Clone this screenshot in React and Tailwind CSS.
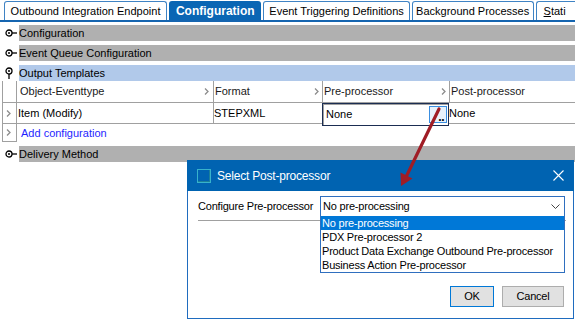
import React from "react";

function KeyIcon() {
  return (
    <svg width="12" height="8" viewBox="0 0 12 8">
      <circle cx="4" cy="4" r="3" fill="white" stroke="black" strokeWidth="1.3" />
      <circle cx="4" cy="4" r="1" fill="black" />
      <line x1="7" y1="4" x2="12" y2="4" stroke="black" strokeWidth="1.3" />
    </svg>
  );
}

function PinIcon() {
  return (
    <svg width="8" height="12" viewBox="0 0 8 12">
      <circle cx="4" cy="4" r="3" fill="white" stroke="black" strokeWidth="1.3" />
      <circle cx="4" cy="4" r="1" fill="black" />
      <line x1="4" y1="7" x2="4" y2="12" stroke="black" strokeWidth="1.3" />
    </svg>
  );
}

function Chevron() {
  return (
    <svg width="5" height="7" viewBox="0 0 5 7">
      <path d="M1 0.5 L4 3.5 L1 6.5" fill="none" stroke="#8c8c8c" strokeWidth="1.3" />
    </svg>
  );
}

function Section({ label, open, blue }) {
  return (
    <div className="flex items-center h-[16px]">
      <div className="w-[19px] h-full flex items-center pl-[5px]">
        {open ? <PinIcon /> : <KeyIcon />}
      </div>
      <div className={blue ? "flex-1 h-full flex items-center bg-[#b1c9ea]" : "flex-1 h-full flex items-center bg-[#b0b0b0]"}>
        {label}
      </div>
    </div>
  );
}

function Tab({ label, active, w }) {
  if (active) {
    return (
      <div className={`${w} h-[19px] flex items-center justify-center rounded-t-[3px] bg-[#0a66b4] text-white font-bold text-[12px]`}>
        {label}
      </div>
    );
  }
  return (
    <div className={`${w} h-[19px] flex items-center justify-center rounded-t-[3px] border border-b-0 border-[#3f83c4] bg-white`}>
      {label}
    </div>
  );
}

export default function App() {
  return (
    <div className="relative w-[575px] h-[319px] overflow-hidden bg-white text-black text-[11px] font-['Liberation_Sans',Arial,sans-serif]">
      {/* tabs */}
      <div className="flex items-end gap-[2px] h-[22px] pl-[4px] border-b-2 border-[#1565b0] whitespace-nowrap">
        <Tab label="Outbound Integration Endpoint" w="w-[166px]" />
        <Tab label="Configuration" w="w-[94px]" active />
        <Tab label="Event Triggering Definitions" w="w-[149px]" />
        <Tab label="Background Processes" w="w-[124px]" />
        <div className="w-[40px] h-[19px] flex items-center pl-[7px] rounded-tl-[3px] border border-b-0 border-r-0 border-[#3f83c4] overflow-hidden">
          <span className="underline">S</span>tati
        </div>
      </div>

      {/* sections */}
      <div className="mt-[3px] flex flex-col gap-[4px]">
        <Section label="Configuration" />
        <Section label="Event Queue Configuration" />
        <Section label="Output Templates" open blue />
      </div>

      {/* table */}
      <div className="pl-[2px] text-[#1a1a1a]">
        <div className="flex h-[22px]">
          <div className="w-[15px] border-x border-b border-[#a0a0a0]" />
          <div className="w-[197px] flex items-center justify-between pl-[3px] pr-[4px] border-r border-b border-[#a0a0a0]">
            Object-Eventtype <Chevron />
          </div>
          <div className="w-[109px] flex items-center justify-between pl-[1px] pr-[3px] border-r border-b border-[#a0a0a0]">
            Format <Chevron />
          </div>
          <div className="w-[127px] flex items-center justify-between pl-[1px] pr-[3px] border-r border-b border-[#a0a0a0]">
            Pre-processor <Chevron />
          </div>
          <div className="flex-1 flex items-center pl-[1px] border-b border-[#a0a0a0]">Post-processor</div>
        </div>
        <div className="flex h-[21px] text-black">
          <div className="w-[15px] flex items-center pl-[3px] border-x border-b border-[#a0a0a0]">
            <Chevron />
          </div>
          <div className="w-[197px] flex items-center pl-[1px] border-r border-b border-[#a0a0a0]">Item (Modify)</div>
          <div className="w-[109px] flex items-center border-r border-b border-[#a0a0a0]">STEPXML</div>
          <div className="w-[127px] h-[23px] flex items-center justify-between pl-[3px] pr-[1px] bg-white border border-[#1b2d52] shadow-[inset_1px_1px_0_#a0a0a0] -ml-px">
            None
            <div className="w-[18px] h-[17px] flex items-end justify-end pr-[2px] pb-[1px] leading-[8px] border border-[#3a8ee0] bg-[#e8f2fb] font-bold text-[12px] tracking-[-0.5px]">
              ..
            </div>
          </div>
          <div className="flex-1 flex items-center border-b border-[#a0a0a0]">None</div>
        </div>
        <div className="flex h-[18px]">
          <div className="w-[15px] flex items-center pl-[3px] border-x border-b border-[#a0a0a0]">
            <Chevron />
          </div>
          <div className="flex items-center pl-[4px] text-[#1f1fff]">Add configuration</div>
        </div>
      </div>

      <div className="mt-[4px]">
        <Section label="Delivery Method" />
      </div>

      {/* dialog */}
      <div className="absolute left-[187px] top-[160px] w-[387px] h-[159px] flex flex-col bg-white border-x border-b border-[#1f6cbf] tracking-[-0.2px]">
        <div className="h-[31px] -mx-px flex items-center pl-[10px] pr-[10px] bg-[#0063b1] text-white text-[12px]">
          <div className="w-[14px] h-[14px] border border-[#37b2cc] shadow-[inset_-1px_-1px_0_#1a7f9a]" />
          <span className="ml-[6px] flex-1">Select Post-processor</span>
          <svg width="11" height="11" viewBox="0 0 11 11">
            <path d="M0.5 0.5 L10.5 10.5 M10.5 0.5 L0.5 10.5" stroke="white" strokeWidth="1.1" />
          </svg>
        </div>
        <div className="flex-1 flex flex-col pl-[10px] pr-[7px] pt-[5px]">
          <div className="flex items-center">
            <div className="w-[122px]">Configure Pre-processor</div>
            <div className="relative w-[245px] h-[20px] flex items-center justify-between pl-[2px] pr-[4px] border border-[#2f6fbf] bg-white">
              <span>No pre-processing</span>
              <svg width="9" height="5" viewBox="0 0 9 5">
                <path d="M0.5 0.5 L4.5 4.5 L8.5 0.5" fill="none" stroke="#444" strokeWidth="1" />
              </svg>
              <div className="absolute top-full -left-px -right-px z-10 flex flex-col pt-[1px] bg-white border-x border-b border-[#2f6fbf]">
                <div className="h-[14px] flex items-center pl-[1px] bg-[#0078d7] text-white">No pre-processing</div>
                <div className="h-[14px] flex items-center pl-[1px]">PDX Pre-processor 2</div>
                <div className="h-[14px] flex items-center pl-[1px]">Product Data Exchange Outbound Pre-processor</div>
                <div className="h-[14px] flex items-center pl-[1px]">Business Action Pre-processor</div>
              </div>
            </div>
          </div>
          <div className="mt-[4px] h-px bg-[#a0a0a0]" />
          <div className="mt-[65px] flex justify-end gap-[8px] pr-[2px]">
            <div className="w-[44px] h-[21px] flex items-center justify-center bg-[#e1e1e1] border border-[#0078d7]">OK</div>
            <div className="w-[62px] h-[21px] flex items-center justify-center bg-[#e1e1e1] border border-[#adadad]">Cancel</div>
          </div>
        </div>
      </div>

      {/* annotation arrow */}
      <svg className="absolute inset-0 pointer-events-none z-20" width="575" height="319">
        <line x1="439" y1="109" x2="406.5" y2="176" stroke="#a01d25" strokeWidth="3.2" strokeLinecap="round" />
        <polygon points="401,186 412.5,178.5 400.5,172.5" fill="#a01d25" />
      </svg>
    </div>
  );
}
